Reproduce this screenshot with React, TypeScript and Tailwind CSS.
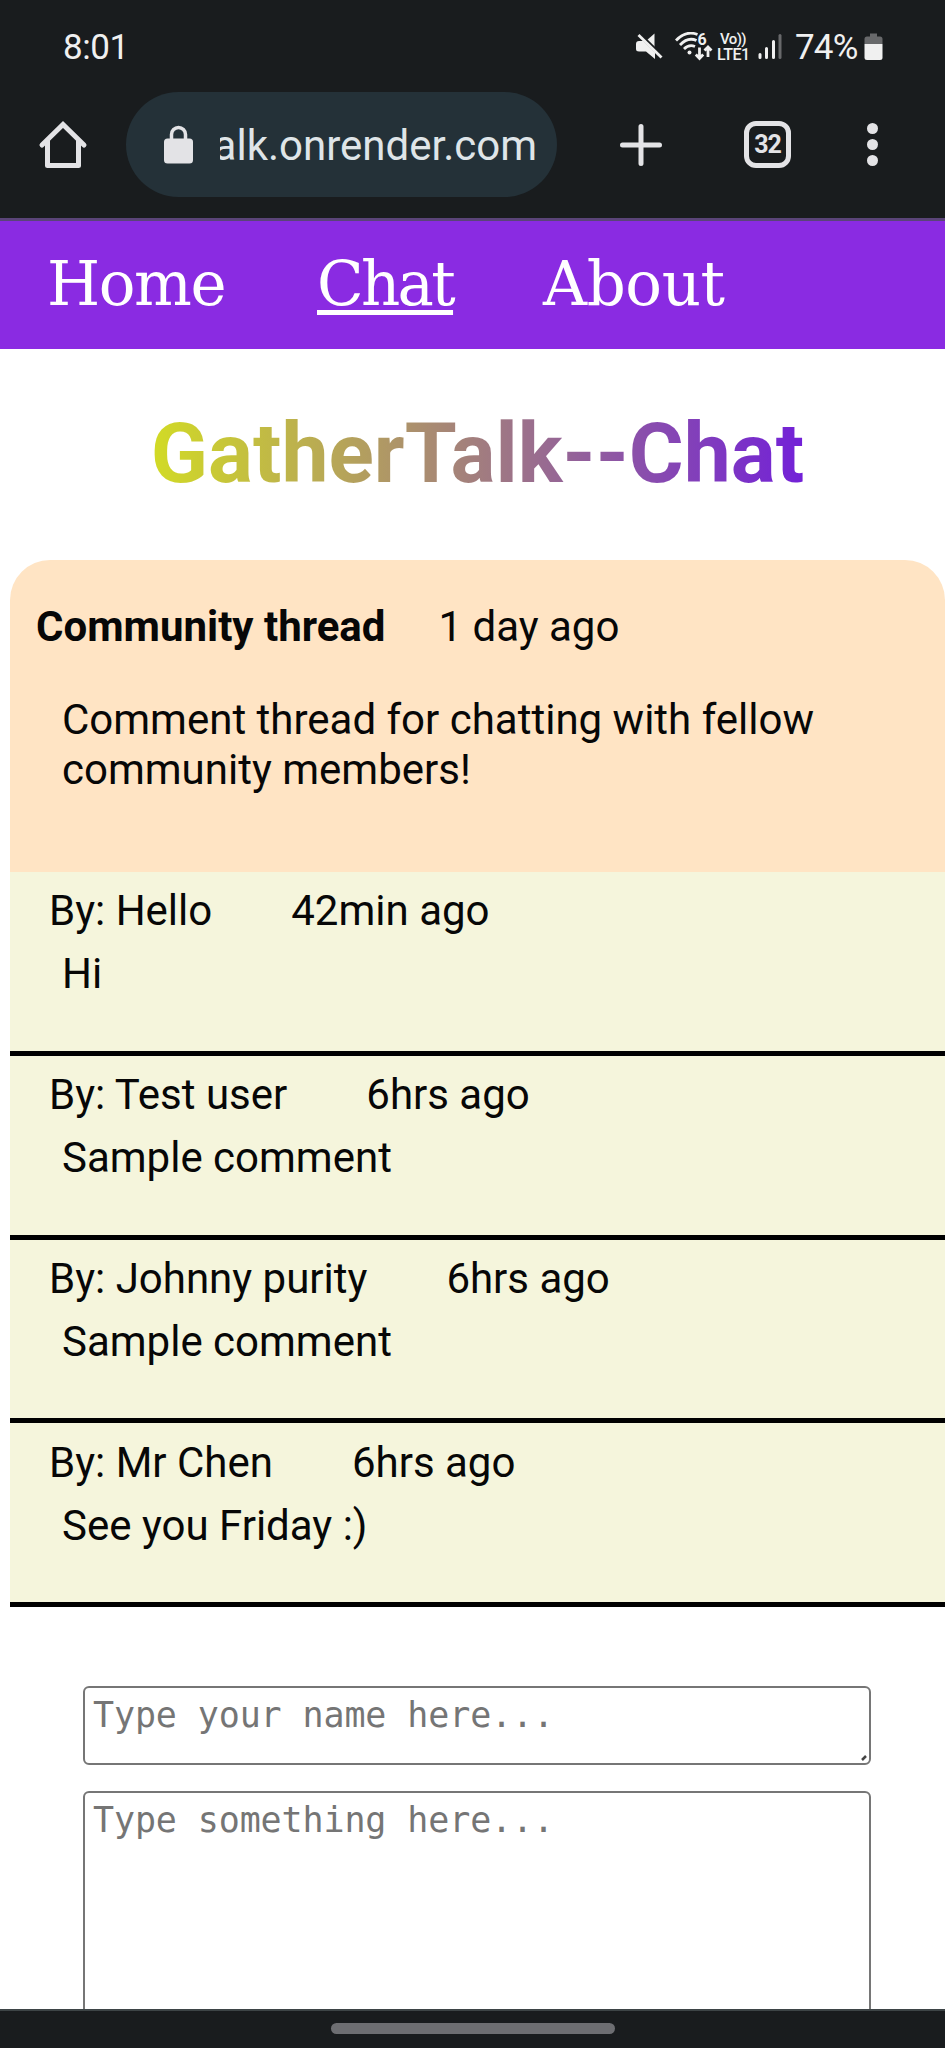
import type { ReactNode } from "react";

const comments = [
  { author: "Hello", time: "42min ago", text: "Hi" },
  { author: "Test user", time: "6hrs ago", text: "Sample comment" },
  { author: "Johnny purity", time: "6hrs ago", text: "Sample comment" },
  { author: "Mr Chen", time: "6hrs ago", text: "See you Friday :)" },
];

function MuteIcon() {
  return (
    <svg width="27" height="27" viewBox="0 0 27 27" fill="#f0f0f0">
      <path d="M10 8 L18.5 0.5 V15 Z" />
      <path d="M3 8 H8 L19 19 V26 L10 18.5 H3 Q0 18.5 0 16 V11 Q0 8 3 8 Z" />
      <path d="M5 3 L24 21.5" stroke="#191c1e" strokeWidth="4" />
      <path d="M2.5 2 L25.5 24.5" stroke="#f0f0f0" strokeWidth="2.8" />
    </svg>
  );
}

function WifiIcon() {
  return (
    <svg width="38" height="29" viewBox="0 0 38 29" fill="none" stroke="#f0f0f0" strokeWidth="2.8">
      <path d="M1 8.5 Q11 -2 22.5 2.5" />
      <path d="M5 13 Q13 4.500 21.500 8.500" />
      <path d="M9 17 Q14 12 20 14.500" />
      <circle cx="14.500" cy="20.500" r="2" fill="#f0f0f0" stroke="none" />
      <text
        x="22.500"
        y="12.500"
        fill="#f0f0f0"
        stroke="none"
        className="font-['Roboto',sans-serif] text-[16px] font-bold"
      >
        6
      </text>
      <path d="M24.500 15.500 V26 M20.800 22.500 L24.500 26.500 L28.200 22.500" />
      <path d="M33 25 V15.500 M29.500 18.500 L33 15 L36.500 18.500" />
    </svg>
  );
}

function SignalIcon() {
  return (
    <svg width="24" height="27" viewBox="0 0 24 27" strokeWidth="3" strokeLinecap="round">
      <path d="M2 21.500 V24.500 M8.500 15.500 V24.500 M15.500 8.500 V24.500" stroke="#f0f0f0" />
      <path d="M22 2.500 V24.500" stroke="#68696b" />
    </svg>
  );
}

function BatteryIcon() {
  return (
    <svg width="19" height="28" viewBox="0 0 19 28">
      <path d="M6 0.500 H13 V3.500 H16 Q18.500 3.500 18.500 6 V11 H0.500 V6 Q0.500 3.500 3 3.500 H6 Z" fill="#68696b" />
      <path d="M0.500 11 H18.500 V24.500 Q18.500 27 16 27 H3 Q0.500 27 0.500 24.500 Z" fill="#f0f0f0" />
    </svg>
  );
}

function StatusBar() {
  return (
    <div className="flex h-[92px] items-start pt-[27px] pl-[63px] text-[35px] leading-[41px] text-[#f0f0f0]">
      <span className="w-[573px] tracking-[-0.4px]">8:01</span>
      <div className="mt-[6px]">
        <MuteIcon />
      </div>
      <div className="mt-[5px] ml-[12px]">
        <WifiIcon />
      </div>
      <div className="mt-[5px] ml-[4px] w-[35px] text-[15px] leading-[15px] font-medium">
        <div className="pl-[3px] tracking-[-0.6px]">Vo))</div>
        <div className="text-[16px] tracking-[-0.5px]">LTE1</div>
      </div>
      <div className="mt-[6px] ml-[6px]">
        <SignalIcon />
      </div>
      <span className="ml-[13px] w-[64px] tracking-[-0.8px]">74%</span>
      <div className="mt-[6px] ml-[5px]">
        <BatteryIcon />
      </div>
    </div>
  );
}

function BrowserBar() {
  return (
    <div className="flex h-[105px] items-center">
      <svg className="ml-[38px]" width="50" height="50" viewBox="0 0 50 50" fill="none" stroke="#e3e3e6" strokeWidth="5" strokeLinecap="round" strokeLinejoin="round">
        <path d="M4 25 L25 4.500 L46 25" strokeLinejoin="miter" />
        <path d="M9.500 21 V45.500 H40.500 V21" />
      </svg>
      <div className="ml-[38px] flex h-[105px] w-[431px] items-center rounded-full bg-[#243138] pl-[37px]">
        <svg width="31" height="40" viewBox="0 0 31 40">
          <path d="M8.500 15 V9.500 A7 7 0 0 1 22.500 9.500 V15" fill="none" stroke="#e3e3e6" strokeWidth="3.500" />
          <rect x="1" y="13.500" width="29" height="25" rx="3.500" fill="#e3e3e6" />
        </svg>
        <div className="mt-[2px] ml-[26px] flex w-[317px] justify-end overflow-hidden text-[42px] leading-[50px] whitespace-nowrap text-[#dfe5e8]">
          alk.onrender.com
        </div>
      </div>
      <svg className="ml-[62px]" width="44" height="44" viewBox="0 0 44 44" stroke="#e3e3e6" strokeWidth="5" strokeLinecap="round">
        <path d="M22 3.500 V40.500 M3.500 22 H40.500" />
      </svg>
      <div className="ml-[81px] flex h-[47px] w-[47px] items-center justify-center rounded-[12px] border-[5px] border-[#e3e3e6] text-[25px] leading-none font-bold tracking-[-1px] text-[#e3e3e6]">
        32
      </div>
      <div className="ml-[76px] flex flex-col gap-[5px]">
        <span className="h-[11px] w-[11px] rounded-full bg-[#e3e3e6]" />
        <span className="h-[11px] w-[11px] rounded-full bg-[#e3e3e6]" />
        <span className="h-[11px] w-[11px] rounded-full bg-[#e3e3e6]" />
      </div>
    </div>
  );
}

function NavLink({ className, children }: { className: string; children: ReactNode }) {
  return (
    <a href="#" className={className}>
      {children}
    </a>
  );
}

function Nav() {
  return (
    <nav className="flex h-[131px] items-start border-t-[3px] border-[#5a4478] bg-[#8a2be2] pt-[27px] pl-[47px] font-['DejaVu_Serif',serif] text-[61px] leading-[72px] text-white">
      <NavLink className="w-[270px] tracking-[-1.4px]">Home</NavLink>
      <NavLink className="mr-[90px] w-[136px] tracking-[-2.7px] underline decoration-[5px] underline-offset-[5px]">
        Chat
      </NavLink>
      <NavLink className="tracking-[-0.4px]">About</NavLink>
    </nav>
  );
}

function Thread() {
  return (
    <section className="ml-[10px] text-[42px] leading-[49px] text-[#070707]">
      <div className="h-[312px] rounded-t-[40px] bg-[#ffe4c4] pt-[42px]">
        <div className="flex gap-[53px] pl-[26px]">
          <h2 className="font-bold">Community thread</h2>
          <span>1 day ago</span>
        </div>
        <p className="mt-[44px] w-[860px] pl-[52px] leading-[50px]">
          Comment thread for chatting with fellow community members!
        </p>
      </div>
      {comments.map((comment) => (
        <div
          key={comment.author}
          className="h-[183.75px] border-b-[5px] border-black bg-[#f5f5dc] pt-[14.4px]"
        >
          <div className="flex gap-[79px] pl-[39px]">
            <span>By: {comment.author}</span>
            <span>{comment.time}</span>
          </div>
          <p className="mt-[14px] pl-[52px]">{comment.text}</p>
        </div>
      ))}
    </section>
  );
}

function CommentForm() {
  return (
    <form className="mt-[79px] flex flex-col gap-[26px] pl-[83px] font-['DejaVu_Sans_Mono',monospace] text-[35px] leading-[41px] tracking-[-0.12px] text-[#757575]">
      <div className="flex h-[79px] w-[788px] items-start justify-between rounded-[6px] border-[2.5px] border-[#767676] pt-[7px] pl-[8px]">
        <span>Type your name here...</span>
        <svg className="mr-[2px] mb-[2px] self-end" width="6" height="6" viewBox="0 0 6 6">
          <path d="M1 5 L5 1" stroke="#444" strokeWidth="2.5" />
        </svg>
      </div>
      <div className="h-[400px] w-[788px] rounded-[6px] border-[2.5px] border-[#767676] pt-[7px] pl-[8px]">
        Type something here...
      </div>
    </form>
  );
}

export default function App() {
  return (
    <div className="flex h-[2048px] w-[945px] flex-col overflow-hidden bg-white font-['Roboto',sans-serif]">
      <header className="h-[218px] shrink-0 bg-[#191c1e]">
        <StatusBar />
        <BrowserBar />
      </header>
      <main className="min-h-0 flex-1 overflow-hidden">
        <Nav />
        <div className="flex justify-center pt-[55px] pb-[57px] pl-[10px]">
          <h1 className="bg-linear-to-r/srgb from-[#d2db25] to-[#7220d8] bg-clip-text text-[84px] leading-[99px] font-bold text-transparent">
            GatherTalk--Chat
          </h1>
        </div>
        <Thread />
        <CommentForm />
      </main>
      <footer className="flex h-[39px] shrink-0 justify-center border-t-[2px] border-[#3d4446] bg-[#191c1e] pt-[12px]">
        <div className="h-[11px] w-[284px] rounded-full bg-[#6d6e72]" />
      </footer>
    </div>
  );
}
